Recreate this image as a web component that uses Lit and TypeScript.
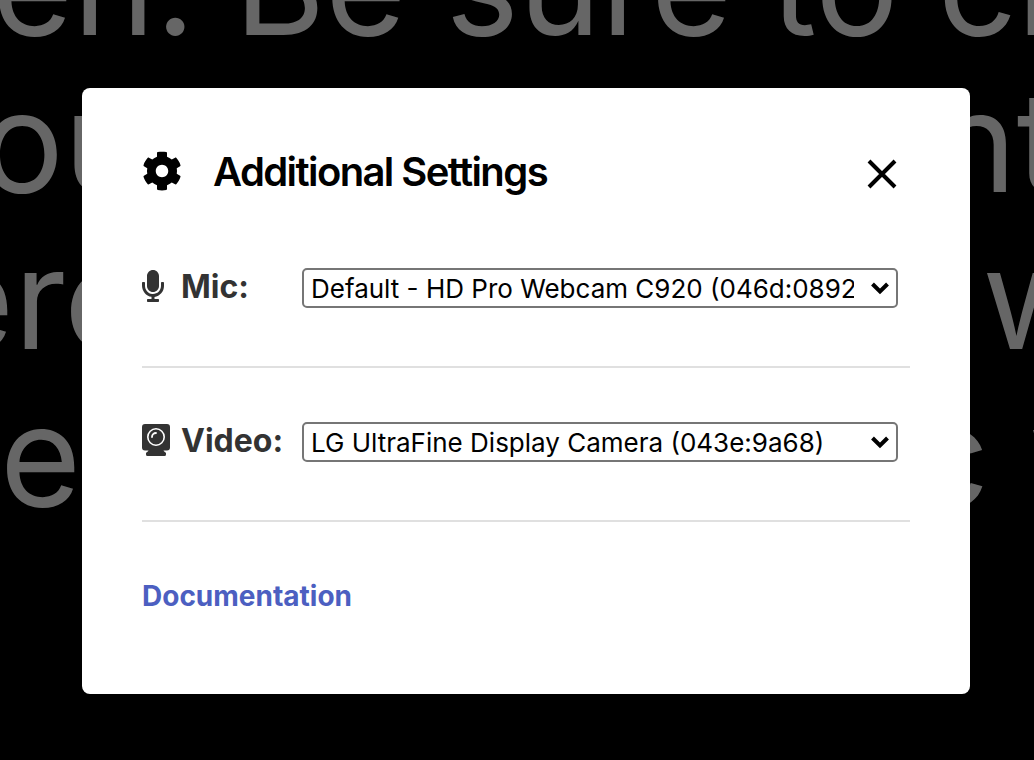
import { LitElement, html, css } from "lit";
import { customElement, property } from "lit/decorators.js";

@customElement("prompt-text")
class PromptText extends LitElement {
  static styles = css`
    :host {
      display: block;
      overflow: hidden;
      color: #666;
      font-size: 139px;
      line-height: 157px;
      white-space: nowrap;
    }
    .line {
      display: flex;
      justify-content: space-between;
    }
    .first { margin: -94px -120px 0 -8px; }
    .second { margin: 0 -28px 0 -95px; }
    .third { margin: 0 -62px 0 -67px; }
    .fourth { margin: 0 -108px 0 0; }
  `;

  render() {
    return html`
      <div class="line first"><span>en. Be sure to ch</span></div>
      <div class="line second"><span>you</span><span>nt</span></div>
      <div class="line third"><span>ere</span><span>w</span></div>
      <div class="line fourth"><span>e</span><span>c w</span></div>
    `;
  }
}

@customElement("device-row")
class DeviceRow extends LitElement {
  @property() label = "";
  @property() kind = "";
  @property({ type: Array }) devices: string[] = [];

  static styles = css`
    :host {
      display: flex;
      align-items: center;
      height: 40px;
      padding: 0 12px 58px 0;
      border-bottom: 2px solid #e0e0e0;
    }
    .label {
      display: grid;
      grid-template-columns: 28px auto;
      align-items: center;
      justify-content: start;
      flex: 0 0 160px;
      column-gap: 11px;
      padding-bottom: 2px;
      color: #333;
      font-size: 32px;
      font-weight: 700;
      line-height: 40px;
    }
    .icon { display: block; height: 32px; margin-bottom: 2px; }
    .field { display: grid; flex: 1; min-width: 0; align-items: center; }
    .select {
      grid-area: 1 / 1;
      appearance: none;
      width: 100%;
      height: 40px;
      margin: 0;
      padding: 2px 42px 0 7px;
      border: 2px solid #767676;
      border-radius: 5px;
      background: #fff;
      color: #000;
      font: 400 26px/32px Inter, "Liberation Sans", sans-serif;
    }
    .chevron {
      grid-area: 1 / 1;
      justify-self: end;
      width: 20px;
      height: 14px;
      margin-right: 8px;
      pointer-events: none;
    }
  `;

  private icon() {
    return this.kind === "mic"
      ? html`<svg class="icon" width="22" height="32" viewBox="0 0 352 512" aria-hidden="true">
          <path fill="currentColor" d="M176 352c53.02 0 96-42.98 96-96V96c0-53.02-42.98-96-96-96S80 42.98 80 96v160c0 53.02 42.98 96 96 96zm160-160h-16c-8.84 0-16 7.16-16 16v48c0 74.8-64.49 134.82-140.79 127.38C96.71 376.89 48 317.11 48 250.3V208c0-8.84-7.16-16-16-16H16c-8.84 0-16 7.16-16 16v40.16c0 89.64 63.97 169.55 152 181.69V464H96c-8.84 0-16 7.16-16 16v16c0 8.84 7.16 16 16 16h160c8.84 0 16-7.16 16-16v-16c0-8.84-7.16-16-16-16h-56v-33.77C285.71 418.47 352 344.9 352 256v-48c0-8.84-7.16-16-16-16z"/>
        </svg>`
      : html`<svg class="icon" width="28" height="32" viewBox="0 0 28 32" aria-hidden="true">
          <path fill="currentColor" d="M3 0h22a3 3 0 0 1 3 3v20.500a3 3 0 0 1-3 3h-3.500c.5 1.300 1.500 1.500 2.500 2.500v1.500q0 1.500-1.500 1.500h-17Q4 32 4 30.500V29c1-1 2-1.200 2.500-2.500H3a3 3 0 0 1-3-3V3a3 3 0 0 1 3-3z"/>
          <circle cx="14" cy="13" r="8.200" fill="none" stroke="#fff" stroke-width="1.600"/>
          <path d="M10 13a4 4 0 0 1 4-4" fill="none" stroke="#fff" stroke-width="1.800" stroke-linecap="round"/>
        </svg>`;
  }

  render() {
    return html`
      <label class="label" for="device">${this.icon()}<span>${this.label}</span></label>
      <div class="field">
        <select class="select" id="device">
          ${this.devices.map((d) => html`<option>${d}</option>`)}
        </select>
        <svg class="chevron" viewBox="0 0 20 14" aria-hidden="true">
          <path d="M2.500 3 10 10.500 17.500 3" fill="none" stroke="#000" stroke-width="4"/>
        </svg>
      </div>
    `;
  }
}

@customElement("app-root")
class AppRoot extends LitElement {
  static styles = css`
    :host {
      display: grid;
      min-height: 100vh;
      overflow: hidden;
      background: #000;
      font-family: Inter, "Liberation Sans", sans-serif;
    }
    .backdrop { grid-area: 1 / 1; min-width: 0; }
    .dialog {
      grid-area: 1 / 1;
      position: relative;
      align-self: start;
      box-sizing: border-box;
      margin: 88px 64px 66px 82px;
      padding: 60px 60px 80px;
      border-radius: 8px;
      background: #fff;
    }
    .header {
      display: flex;
      align-items: center;
      height: 48px;
      padding-right: 13px;
    }
    .gear { width: 40px; height: 40px; margin: 0 31px 2px 0; }
    .title {
      flex: 1;
      margin: 0;
      color: #000;
      font-size: 40px;
      font-weight: 600;
      line-height: 48px;
      letter-spacing: -0.04em;
    }
    .close {
      display: grid;
      padding: 4px 0 0;
      border: 0;
      background: none;
      color: #000;
    }
    .rows { display: grid; gap: 54px; margin-top: 72px; }
    .docs {
      display: inline-block;
      margin-top: 56px;
      color: #4c5fc1;
      font-size: 28px;
      font-weight: 700;
      line-height: 36px;
      text-decoration: none;
    }
  `;

  render() {
    return html`
      <prompt-text class="backdrop"></prompt-text>
      <section class="dialog" role="dialog" aria-labelledby="title">
        <header class="header">
          <svg class="gear" viewBox="0 0 512 512" aria-hidden="true">
            <path fill="currentColor" d="M487.4 315.7l-42.6-24.6c4.3-23.2 4.3-47 0-70.2l42.6-24.6c4.9-2.8 7.1-8.6 5.5-14-11.1-35.6-30-67.8-54.7-94.6-3.8-4.1-10-5.1-14.8-2.3L380.8 110c-17.9-15.4-38.5-27.3-60.8-35.1V25.8c0-5.6-3.9-10.5-9.4-11.7-36.7-8.2-74.3-7.8-109.2 0-5.5 1.2-9.4 6.1-9.4 11.7V75c-22.2 7.9-42.8 19.8-60.8 35.1L88.7 85.5c-4.9-2.8-11-1.9-14.8 2.3-24.7 26.7-43.6 58.9-54.7 94.6-1.7 5.4.6 11.2 5.5 14L67.3 221c-4.3 23.2-4.3 47 0 70.2l-42.6 24.6c-4.9 2.8-7.1 8.6-5.5 14 11.1 35.6 30 67.8 54.7 94.6 3.8 4.1 10 5.1 14.8 2.3l42.6-24.6c17.9 15.4 38.5 27.3 60.8 35.1v49.2c0 5.6 3.9 10.5 9.4 11.7 36.7 8.2 74.3 7.8 109.2 0 5.5-1.2 9.4-6.1 9.4-11.7v-49.2c22.2-7.9 42.8-19.8 60.8-35.1l42.6 24.6c4.9 2.8 11 1.9 14.8-2.3 24.7-26.7 43.6-58.9 54.7-94.6 1.5-5.5-.7-11.3-5.6-14.1zM256 336c-44.1 0-80-35.9-80-80s35.9-80 80-80 80 35.9 80 80-35.9 80-80 80z"/>
          </svg>
          <h1 class="title" id="title">Additional Settings</h1>
          <button class="close" aria-label="Close">
            <svg width="30" height="30" viewBox="0 0 30 30" aria-hidden="true">
              <path d="M2 2 28 28M28 2 2 28" stroke="currentColor" stroke-width="4"/>
            </svg>
          </button>
        </header>
        <div class="rows">
          <device-row kind="mic" label="Mic:" .devices=${["Default - HD Pro Webcam C920 (046d:0892)"]}></device-row>
          <device-row kind="video" label="Video:" .devices=${["LG UltraFine Display Camera (043e:9a68)"]}></device-row>
        </div>
        <a class="docs" href="#documentation">Documentation</a>
      </section>
    `;
  }
}
